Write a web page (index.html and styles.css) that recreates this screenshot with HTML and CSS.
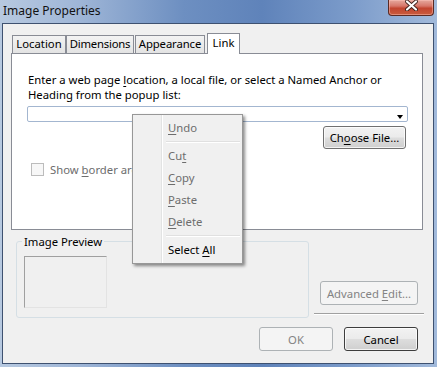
FILE: index.html
```html
<!DOCTYPE html>
<html lang="en">
  <head>
    <meta charset="UTF-8" />
    <title>Image Properties</title>
    <link rel="stylesheet" href="styles.css">
  </head>
  <body>
    <div class="window">
      <!-- Title bar -->
      <div class="titlebar">
        <span class="title">Image Properties</span>
        <button class="close-btn" aria-label="Close">
          <svg width="13" height="11" viewBox="0 0 13 11">
            <path d="M2 1.5 L11 9.5 M11 1.5 L2 9.5" stroke="#3b1f1a" stroke-width="3.8" stroke-linecap="round" />
            <path d="M2 1.5 L11 9.5 M11 1.5 L2 9.5" stroke="#ffffff" stroke-width="2.2" stroke-linecap="round" />
          </svg>
        </button>
      </div>

      <div class="client">
        <!-- Tabs -->
        <div class="tabbox">
          <div class="tabs">
            <div class="tab tab-location">Location</div>
            <div class="tab tab-dimensions">Dimensions</div>
            <div class="tab tab-appearance">Appearance</div>
            <div class="tab tab-link active">Link</div>
          </div>
          <div class="panel">
            <p class="prompt">Enter a web page <u>l</u>ocation, a local file, or select a Named Anchor or<br>Heading from the popup list:</p>
            <div class="combo"><span class="combo-arrow"></span></div>
            <div class="file-row">
              <button class="btn btn-file">Ch<u>o</u>ose File...</button>
            </div>
            <label class="check is-disabled">
              <span class="check-box"></span>
              <span>Show <u>b</u>order around linked image</span>
            </label>
          </div>
        </div>

        <!-- Preview and advanced edit -->
        <div class="lower">
          <fieldset class="preview-group">
            <legend>Image Preview</legend>
            <div class="preview-box"></div>
          </fieldset>
          <div class="side">
            <button class="btn btn-advanced" disabled>Advanced <u>E</u>dit...</button>
            <div class="separator"></div>
          </div>
        </div>

        <!-- Dialog buttons -->
        <div class="actions">
          <button class="btn btn-dialog" disabled>OK</button>
          <button class="btn btn-dialog btn-default">Cancel</button>
        </div>
      </div>

      <!-- Context menu over the location field -->
      <div class="menu">
        <div class="menu-item is-disabled"><u>U</u>ndo</div>
        <div class="menu-sep"></div>
        <div class="menu-item is-disabled">Cu<u>t</u></div>
        <div class="menu-item is-disabled"><u>C</u>opy</div>
        <div class="menu-item is-disabled"><u>P</u>aste</div>
        <div class="menu-item is-disabled"><u>D</u>elete</div>
        <div class="menu-sep"></div>
        <div class="menu-item">Select <u>A</u>ll</div>
      </div>
    </div>
  </body>
</html>
```

FILE: styles.css
```css
/* Page */
body {
  margin: 0;
  font-family: 'Noto Sans', sans-serif;
  font-size: 11.3px;
  color: #000;
}

u {
  text-decoration-thickness: 1px;
  text-underline-offset: 2px;
}

/* Window frame */
.window {
  position: relative;
  width: 437px;
  height: 367px;
  box-sizing: border-box;
  padding: 0 3px 3px 2px;
  display: flex;
  flex-direction: column;
  overflow: hidden;
  background: linear-gradient(
    to right,
    #b7c9e0 0%,
    #9fb6d7 18%,
    #6d8fc1 42%,
    #5f83ba 60%,
    #7b9bca 80%,
    #a2badb 100%
  );
}

.titlebar {
  flex: none;
  height: 23px;
  display: flex;
  justify-content: space-between;
  align-items: flex-start;
}

.title {
  padding: 3px 0 0 1px;
  line-height: 15px;
  font-size: 12px;
  color: #111;
}

.close-btn {
  width: 46px;
  height: 16px;
  padding: 0;
  border: 1px solid #5a2a24;
  border-top: none;
  border-radius: 0 0 4px 4px;
  background: linear-gradient(#e6a99e 0%, #d7776a 40%, #c24530 55%, #c95c3e 100%);
  box-shadow: inset 0 0 0 1px rgba(255, 200, 190, 0.45);
  display: flex;
  justify-content: center;
  align-items: flex-start;
}

/* Client area */
.client {
  flex: 1;
  border: 1px solid #3e5170;
  background: #f0f0f0;
  display: flex;
  flex-direction: column;
  padding: 9px 0 12px 0;
}

.tabbox {
  margin: 0 10px 0 8px;
}

.tabs {
  height: 20px;
  display: flex;
  align-items: flex-end;
  padding-left: 1px;
}

.tab {
  height: 18px;
  box-sizing: border-box;
  padding: 0;
  border: 1px solid #898c95;
  border-bottom: none;
  line-height: 16px;
  text-align: center;
  white-space: nowrap;
  background: linear-gradient(#f3f3f3, #e3e3e3);
}

.tab-location {
  width: 54px;
}

.tab-dimensions {
  width: 68px;
  letter-spacing: -0.2px;
}

.tab-appearance {
  width: 70px;
  margin-left: 1px;
  letter-spacing: -0.1px;
}

.tab-link {
  width: 33px;
}

.tab.active {
  position: relative;
  z-index: 1;
  height: 21px;
  margin-bottom: -1px;
  margin-left: 2px;
  padding-top: 1px;
  background: #fff;
}

.panel {
  height: 177px;
  box-sizing: border-box;
  border: 1px solid #898c95;
  background: #fff;
  padding: 0 14px 0 15px;
  display: flex;
  flex-direction: column;
}

.prompt {
  margin: 18px 0 0;
  line-height: 15px;
  padding-left: 1px;
  white-space: nowrap;
}

.combo {
  margin-top: 4px;
  height: 16px;
  box-sizing: border-box;
  border: 1px solid #a3b6d0;
  border-radius: 2px;
  display: flex;
  justify-content: flex-end;
  align-items: flex-start;
}

.combo-arrow {
  margin: 8px 4px 0 0;
  width: 0;
  height: 0;
  border-left: 3.5px solid transparent;
  border-right: 3.5px solid transparent;
  border-top: 4px solid #000;
}

.file-row {
  margin-top: 4px;
  display: flex;
  justify-content: flex-end;
  padding-right: 2px;
}

.check {
  margin: 14px 0 0 4px;
  display: flex;
  align-items: center;
  gap: 6px;
  line-height: 13px;
  white-space: nowrap;
}

.check-box {
  flex: none;
  width: 13px;
  height: 13px;
  box-sizing: border-box;
  border: 1px solid #bcbcbc;
  background: #f7f7f7;
}

.is-disabled {
  color: #6d6d6d;
}

/* Buttons */
.btn {
  font-family: inherit;
  font-size: 11.3px;
  color: #000;
  padding: 0 2px;
  white-space: nowrap;
  box-sizing: border-box;
  border: 1px solid #707070;
  border-radius: 3px;
  background: linear-gradient(#f2f2f2 0%, #ebebeb 48%, #dddddd 52%, #cfcfcf 100%);
  box-shadow: inset 0 0 0 1px rgba(255, 255, 255, 0.75);
}

.btn:disabled {
  color: #838383;
  border-color: #adb2b5;
  background: #f4f4f4;
  box-shadow: none;
}

.btn-file {
  width: 83px;
  height: 23px;
}

.btn-advanced {
  width: 98px;
  height: 24px;
}

.btn-dialog {
  width: 74px;
  height: 24px;
}

.btn-default {
  border-color: #3d3d3d;
}

/* Preview group */
.lower {
  margin-top: 4px;
  height: 84px;
  display: flex;
}

.preview-group {
  margin: 0 0 0 13px;
  width: 293px;
  height: 84px;
  box-sizing: border-box;
  padding: 0 7px 7px;
  border: 1px solid #d5dfe5;
  border-radius: 3px;
}

.preview-group legend {
  margin-left: -2px;
  padding: 0 2px;
  line-height: 15px;
}

.preview-box {
  margin-top: 7px;
  width: 83px;
  height: 52px;
  box-sizing: border-box;
  border: 1px solid #e3e3e3;
  border-top-color: #a0a0a0;
  border-left-color: #a0a0a0;
}

.side {
  margin-left: 5px;
  width: 110px;
  display: flex;
  flex-direction: column;
  justify-content: flex-end;
  align-items: center;
}

.separator {
  margin-top: 8px;
  margin-bottom: 3px;
  align-self: stretch;
  border-top: 1px solid #a0a0a0;
  border-bottom: 1px solid #fff;
}

.actions {
  margin-top: 9px;
  display: flex;
  justify-content: flex-end;
  gap: 11px;
  padding-right: 15px;
}

/* Context menu */
.menu {
  position: absolute;
  left: 132px;
  top: 114px;
  width: 111px;
  box-sizing: border-box;
  padding: 2px;
  border: 1px solid #979797;
  background: #f0f0f0 linear-gradient(
    to right,
    transparent 28px,
    #e2e3e3 28px,
    #e2e3e3 29px,
    #ffffff 29px,
    #ffffff 30px,
    transparent 30px
  );
  box-shadow: 2px 2px 3px rgba(0, 0, 0, 0.45);
  z-index: 5;
}

.menu-item {
  height: 22px;
  line-height: 22px;
  padding-left: 33px;
}

.menu-sep {
  height: 6px;
  margin-left: 31px;
  background: linear-gradient(
    transparent 2px,
    #e0e0e0 2px,
    #e0e0e0 3px,
    #ffffff 3px,
    #ffffff 4px,
    transparent 4px
  );
}
```
